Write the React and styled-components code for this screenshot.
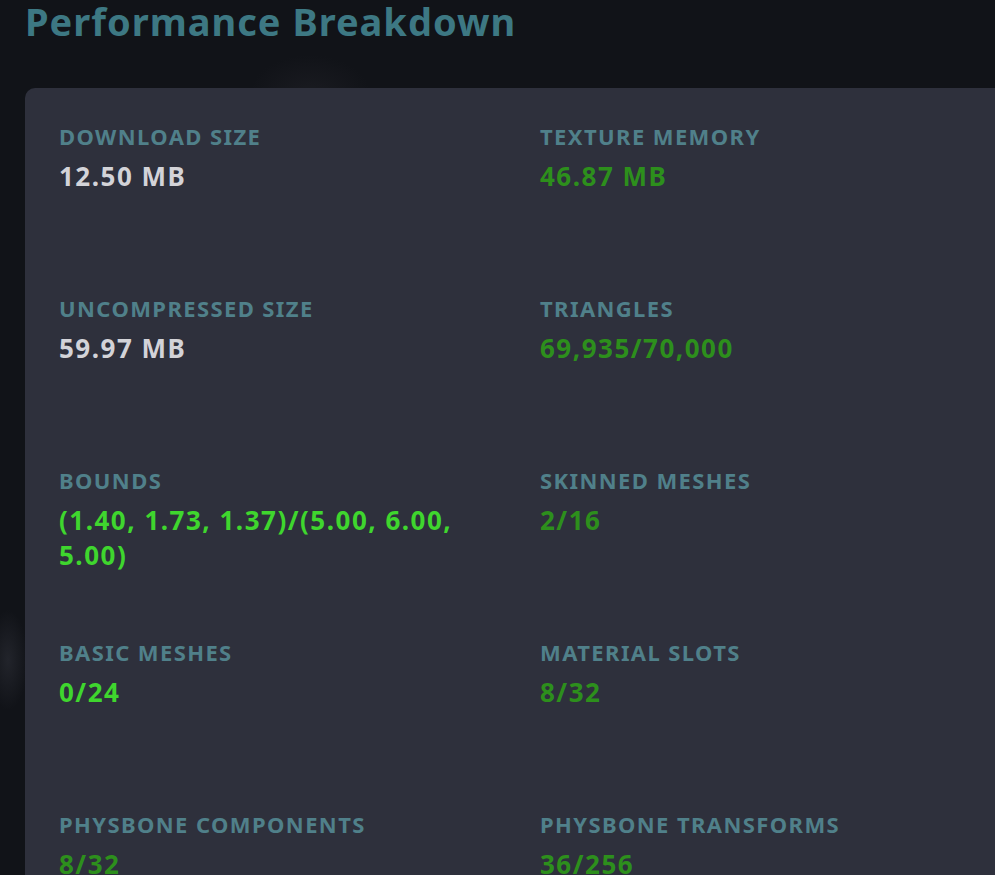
import React from 'react';
import styled, { createGlobalStyle } from 'styled-components';

const GlobalStyle = createGlobalStyle`
  html, body {
    margin: 0;
    padding: 0;
    background: #111318;
    overflow: hidden;
  }
  body {
    font-family: "Noto Sans", "Open Sans", sans-serif;
  }
`;

const Page = styled.div`
  height: 875px;
  overflow: hidden;
  padding-left: 25px;
  background:
    radial-gradient(ellipse 60px 40px at 310px 95px, #1a1b21 0%, rgba(26, 27, 33, 0) 100%),
    radial-gradient(ellipse 20px 50px at 8px 660px, #22242b 0%, rgba(34, 36, 43, 0) 100%),
    #111318;
`;

const Title = styled.h1`
  margin: 0;
  font-size: 38px;
  line-height: 42px;
  font-weight: 700;
  color: #3d7883;
  letter-spacing: 1px;
`;

const Panel = styled.div`
  margin-top: 46px;
  width: 1000px;
  min-height: 800px;
  background: #2e303c;
  border-radius: 10px 0 0 0;
  padding: 35px 0 0 34px;
  box-sizing: border-box;
`;

const Grid = styled.div`
  display: grid;
  grid-template-columns: 481px 481px;
  grid-auto-rows: 172px;
`;

const Stat = styled.div`
  display: flex;
  flex-direction: column;
`;

const Label = styled.div`
  font-size: 22px;
  line-height: 26px;
  font-weight: 700;
  color: #50808a;
  letter-spacing: 1.4px;
  text-transform: uppercase;
`;

const valueColors = {
  plain: '#d3d3d8',
  good: '#2d8f1c',
  great: '#3fd62e',
};

const Value = styled.div`
  margin-top: 10px;
  max-width: 420px;
  font-size: 26px;
  line-height: 35px;
  font-weight: 700;
  letter-spacing: 1.5px;
  color: ${({ tone }) => valueColors[tone] || valueColors.plain};
`;

const stats = [
  { label: 'Download Size', value: '12.50 MB', tone: 'plain' },
  { label: 'Texture Memory', value: '46.87 MB', tone: 'good' },
  { label: 'Uncompressed Size', value: '59.97 MB', tone: 'plain' },
  { label: 'Triangles', value: '69,935/70,000', tone: 'good' },
  { label: 'Bounds', value: '(1.40, 1.73, 1.37)/(5.00, 6.00, 5.00)', tone: 'great' },
  { label: 'Skinned Meshes', value: '2/16', tone: 'good' },
  { label: 'Basic Meshes', value: '0/24', tone: 'great' },
  { label: 'Material Slots', value: '8/32', tone: 'good' },
  { label: 'PhysBone Components', value: '8/32', tone: 'good' },
  { label: 'PhysBone Transforms', value: '36/256', tone: 'good' },
];

export default function App() {
  return (
    <>
      <GlobalStyle />
      <Page>
        <Title>Performance Breakdown</Title>
        <Panel>
          <Grid>
            {stats.map((s) => (
              <Stat key={s.label}>
                <Label>{s.label}</Label>
                <Value tone={s.tone}>{s.value}</Value>
              </Stat>
            ))}
          </Grid>
        </Panel>
      </Page>
    </>
  );
}
